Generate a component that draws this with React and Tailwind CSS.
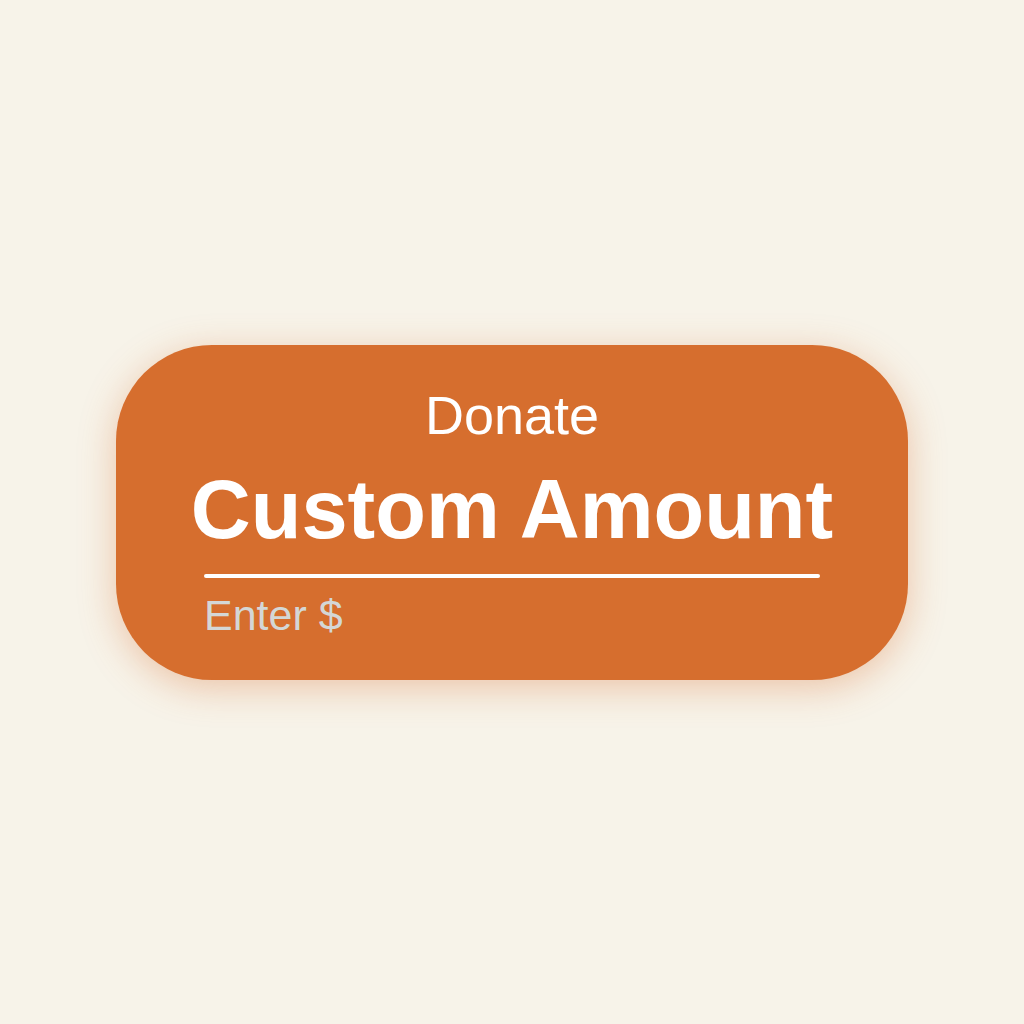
export default function App() {
  return (
    <div className="min-h-screen w-full bg-[#f7f3e9] flex items-center justify-center" style={{ fontFamily: '"Liberation Sans", Arial, sans-serif' }}>
      <div className="w-[792px] h-[335px] rounded-[96px] bg-[#d66e2e] shadow-[0_8px_36px_rgba(214,110,46,0.35)] px-[88px] pt-[43px] flex flex-col">
        <div className="text-[54px] leading-none text-white text-center">Donate</div>
        <div className="mt-[26px] -mx-[40px] whitespace-nowrap text-[83px] leading-none font-bold text-white text-center">Custom Amount</div>
        <div className="mt-[23px] h-[4px] bg-white rounded-full"></div>
        <div className="mt-[16px] text-[43px] leading-none text-[#d4d7d6]">Enter $</div>
      </div>
    </div>
  );
}
